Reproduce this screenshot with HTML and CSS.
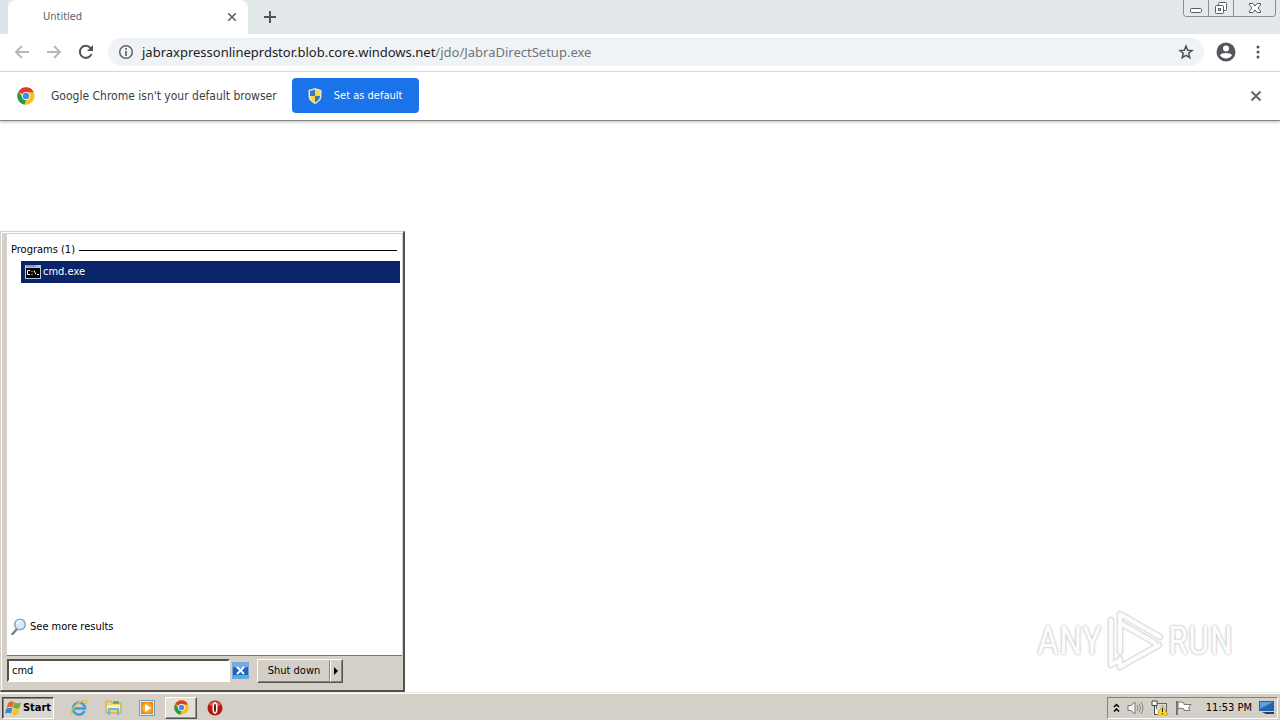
FILE: index.html
```html
<!DOCTYPE html>
<html lang="en">
<head>
<meta charset="utf-8">
<title>Desktop</title>
<link rel="stylesheet" href="styles.css">
</head>
<body>
<svg class="defs" aria-hidden="true">
  <symbol id="chrome" viewBox="0 0 48 48">
    <circle cx="24" cy="24" r="23" fill="#fbc116"/>
    <path d="M24 24 4 12.500A23 23 0 0 1 44 12.500L44 14H24Z" fill="#e33b2e"/>
    <path d="M4 12.500 15.300 29 24 34 20 47A23 23 0 0 1 4 12.500Z" fill="#249a4b"/>
    <circle cx="24" cy="24" r="11" fill="#fff"/>
    <circle cx="24" cy="24" r="8.500" fill="#4688f1"/>
  </symbol>
  <symbol id="cross" viewBox="0 0 12 12"><path d="M1.500 1.500 10.500 10.500M10.500 1.500 1.500 10.500" fill="none" stroke="#5f6368" stroke-width="2"/></symbol>
</svg>
<main class="browser">
  <header class="tabstrip">
    <div class="strip-edge"></div>
    <div class="tab"><span class="tab-title">Untitled</span><button class="plain" aria-label="Close tab"><svg width="10" height="10"><use href="#cross"/></svg></button></div>
    <button class="plain new-tab" aria-label="New tab"><svg width="12" height="12" viewBox="0 0 12 12"><path d="M6 0V12M0 6H12" stroke="#505458" stroke-width="2"/></svg></button>
    <div class="window-controls">
      <button aria-label="Minimize"><svg width="14" height="16" viewBox="0 0 14 16"><rect x="1.500" y="8.500" width="11" height="4" rx="1" fill="#fff" stroke="#555c65"/></svg></button>
      <button aria-label="Restore"><svg width="14" height="16" viewBox="0 0 14 16"><g fill="#fff" stroke="#555c65"><rect x="4.500" y="2.500" width="8" height="8" rx="1"/><rect x="1.500" y="5.500" width="8" height="8" rx="1"/><rect x="4.500" y="8.500" width="2" height="2"/></g></svg></button>
      <button class="wide" aria-label="Close"><svg width="14" height="16" viewBox="0 0 14 16"><path d="M1.500 3.500H5L7 6 9 3.500H12.500V5L10 8 12.500 11V12.500H9L7 10 5 12.500H1.500V11L4 8 1.500 5Z" fill="#fff" stroke="#555c65"/></svg></button>
    </div>
  </header>
  <nav class="toolbar">
    <button class="plain nav-btn" aria-label="Back"><svg width="16" height="16" viewBox="0 0 16 16"><path d="M15 8H2M8 2 2 8 8 14" fill="none" stroke="#b6b8ba" stroke-width="2"/></svg></button>
    <button class="plain nav-btn" aria-label="Forward"><svg width="16" height="16" viewBox="0 0 16 16"><path d="M1 8H14M8 2 14 8 8 14" fill="none" stroke="#b6b8ba" stroke-width="2"/></svg></button>
    <button class="plain nav-btn" aria-label="Reload"><svg width="16" height="16" viewBox="0 0 16 16"><path d="M13.500 10A6 6 0 1 1 12.500 4" fill="none" stroke="#505458" stroke-width="2"/><path d="M15 1V7H9Z" fill="#505458"/></svg></button>
    <div class="address">
      <svg width="16" height="16" viewBox="0 0 16 16"><circle cx="8" cy="8" r="6.300" fill="none" stroke="#5f6368" stroke-width="1.500"/><path d="M8 7V12M8 4V5.700" stroke="#5f6368" stroke-width="1.700"/></svg>
      <a class="url" href="#">jabraxpressonlineprdstor.blob.core.windows.net<span class="path">/jdo/JabraDirectSetup.exe</span></a>
      <button class="plain star" aria-label="Bookmark"><svg width="16" height="16" viewBox="0 0 16 16"><path d="M8 2 9.700 6.200 14 6.500 10.700 9.300 11.800 13.700 8 11.300 4.200 13.700 5.300 9.300 2 6.500 6.300 6.200Z" fill="none" stroke="#505458" stroke-width="1.500"/></svg></button>
    </div>
    <button class="plain" aria-label="Profile"><svg width="20" height="20" viewBox="0 0 20 20"><circle cx="10" cy="10" r="9.500" fill="#54585d"/><circle cx="10" cy="6.500" r="3" fill="#fff"/><path d="M4 13.500C5 10.300 15 10.300 16 13.500 13 17.500 7 17.500 4 13.500Z" fill="#fff"/></svg></button>
    <button class="plain menu-btn" aria-label="Menu"><svg width="4" height="14" viewBox="0 0 4 14" fill="#505458"><circle cx="2" cy="2" r="1.500"/><circle cx="2" cy="7" r="1.500"/><circle cx="2" cy="12" r="1.500"/></svg></button>
  </nav>
  <section class="infobar">
    <svg width="18" height="18"><use href="#chrome"/></svg>
    <span class="info-text">Google Chrome isn't your default browser</span>
    <button class="default-btn"><svg width="14" height="16" viewBox="0 0 14 16"><path d="M7 0 13.500 2V8C13.500 12 10 14.500 7 16 4 14.500.5 12 .5 8V2Z" fill="#e5e5ce"/><path d="M7 1.500V8H2V3Z" fill="#3978c4"/><path d="M7 1.500 12 3V8H7Z" fill="#fada35"/><path d="M2 8H7V14.500C4 13 2 11 2 8Z" fill="#fada35"/><path d="M7 8H12C12 11 10 13 7 14.500Z" fill="#3978c4"/></svg>Set as default</button>
    <button class="plain info-close" aria-label="Dismiss"><svg width="12" height="12"><use href="#cross"/></svg></button>
  </section>
  <section class="page">
    <div class="watermark"><span>ANY</span><svg width="58" height="64" viewBox="0 0 58 64"><g fill="none" stroke-linejoin="round" stroke-linecap="round"><path d="M14 5 54 28M14 5V43M14 14 49 34M5 11V56L12 52M14 58 53 36M14 50V58" stroke="#e0e0e0" stroke-width="7"/><path d="M14 5 54 28M14 5V43M14 14 49 34M5 11V56L12 52M14 58 53 36M14 50V58" stroke="#fcfcfc" stroke-width="4"/></g></svg><span>RUN</span></div>
  </section>
</main>
<aside class="start-menu">
  <div class="results">
    <div class="group"><span>Programs (1)</span><i></i></div>
    <button class="result"><svg width="16" height="14" viewBox="0 0 16 14"><rect width="16" height="14" fill="#b8c3d3"/><path d="M1 1H11" stroke="#5277b8"/><rect x="1" y="3" width="14" height="10" fill="#000"/><path d="M5 5.500H2.500V9.500H5M6.500 6.500H7.500M6.500 9.500H7.500M9 5.500 11 9.500M12 9.500H14" fill="none" stroke="#fff"/></svg>cmd.exe</button>
    <a class="more" href="#"><svg width="16" height="18" viewBox="0 0 16 18"><path d="M6 11 1.500 16" stroke="#777f89" stroke-width="2.500" stroke-linecap="round"/><circle cx="9" cy="6.500" r="5.300" fill="#d3eafb" stroke="#8da4b8" stroke-width="1.500"/><path d="M6 6A3 3 0 0 1 10 3" fill="none" stroke="#fff" stroke-width="1.500"/></svg>See more results</a>
  </div>
  <div class="menu-foot">
    <input class="search" type="text" value="cmd" aria-label="Search programs and files">
    <button class="plain clear" aria-label="Clear search"><svg width="17" height="17" viewBox="0 0 17 17"><rect x=".5" y=".5" width="16" height="16" fill="#2860b5" stroke="#72a7dc"/><path d="M1 1H16V5Q8 7 1 5Z" fill="#76aae5"/><path d="M1 13H16V16H1Z" fill="#42b5e6"/><path d="M5 5 12 12M12 5 5 12" stroke="#fff" stroke-width="2"/></svg></button>
    <div class="split"><button class="shut">Shut down</button><button class="arrow" aria-label="Power options"><svg width="4" height="8" viewBox="0 0 4 8"><path d="M0 0 4 4 0 8Z"/></svg></button></div>
  </div>
</aside>
<footer class="taskbar">
  <button class="start"><svg width="17" height="16" viewBox="0 0 17 16"><path d="M3 3Q6 0 9 2L7.500 7.500Q5 6 1.500 8Z" fill="#eb642d"/><path d="M9.500 2.500Q12 4 16 2.500L14.500 8Q11 9.500 8 7.500Z" fill="#75ad36"/><path d="M1.300 8.500Q4.500 7 7.300 8.300L6 13.500Q3 12 0 13.500Z" fill="#3b86cd"/><path d="M8 8.500Q11 10 14.500 9L13 14Q10 16 6.500 14Z" fill="#f4c331"/></svg>Start</button>
  <div class="quick">
    <button class="task" aria-label="Internet Explorer"><svg width="18" height="18" viewBox="0 0 18 18"><path d="M14.500 12A6 6 0 1 1 15 9.500H4" fill="none" stroke="#35a2de" stroke-width="2.500"/><path d="M2 16C-1 13 5 5 12 2 17 0 18 2 15 5" fill="none" stroke="#e8bf43" stroke-width="1.500"/></svg></button>
    <button class="task" aria-label="Explorer"><svg width="17" height="17" viewBox="0 0 17 17"><path d="M1 2H6L7 4H16V14H1Z" fill="#ead480" stroke="#c8a953"/><path d="M8 2H14V5H8Z" fill="#64ae65"/><path d="M2 6H15V11H2Z" fill="#fff0ae"/><path d="M4 16V10H13V16" fill="none" stroke="#67b8df" stroke-width="2"/></svg></button>
    <button class="task" aria-label="Media Player"><svg width="16" height="16" viewBox="0 0 16 16"><rect x=".5" y=".5" width="15" height="15" fill="#d6edfa" stroke="#6c9fc3"/><rect x="2" y="2" width="12" height="12" fill="#f18a16"/><circle cx="8" cy="8" r="5" fill="#f9aa38"/><path d="M6 4 12 8 6 12Z" fill="#fff"/></svg></button>
    <button class="task active" aria-label="Google Chrome"><svg width="15" height="15"><use href="#chrome"/></svg></button>
    <button class="task" aria-label="Opera"><svg width="16" height="16" viewBox="0 0 16 16"><circle cx="8" cy="8" r="7.500" fill="#b51614"/><path d="M2 5A7 7 0 0 1 14 5Q8 8 2 5Z" fill="#dc5e55"/><ellipse cx="8" cy="8" rx="1.800" ry="5" fill="#8b0808" stroke="#fff" stroke-width="1.500"/></svg></button>
  </div>
  <div class="tray">
    <svg width="7" height="10" viewBox="0 0 7 10"><path d="M1 4 3.500 1.500 6 4M1 8.500 3.500 6 6 8.500" fill="none" stroke="#000" stroke-width="1.500"/></svg>
    <svg width="17" height="16" viewBox="0 0 17 16"><path d="M1 5.500H4L8 2V14L4 10.500H1Z" fill="#f8f8f8" stroke="#777"/><path d="M10 5Q12 8 10 11M12 3.500Q15 8 12 12.500M14 2Q18 8 14 14" fill="none" stroke="#888"/></svg>
    <svg width="17" height="16" viewBox="0 0 17 16"><rect x="5.500" y="3.500" width="10" height="9" fill="#d9d9d5" stroke="#666"/><path d="M1 1H6V5.500H1ZM3.500 5V14.500H8" fill="#fff" stroke="#444"/><path d="M11.500 5 17 15H6Z" fill="#fad52e" stroke="#a8861c" stroke-width=".5"/><path d="M11.500 8V12M11.500 13V14" stroke="#222"/></svg>
    <svg width="18" height="16" viewBox="0 0 18 16"><path d="M2 1V15" stroke="#777" stroke-width="2"/><path d="M3 2.500Q6 1 9 3V4.500H16L13.500 7.500 15 10.500H9V9Q6 7 3 9Z" fill="#fff" stroke="#777"/></svg>
    <time>11:53 PM</time>
    <svg width="16" height="15" viewBox="0 0 16 15"><path d="M0 1H15V11H0Z" fill="#2463ad"/><path d="M1 2H14L1 9Z" fill="#5b9de1"/><path d="M3 12H15V14H7Z" fill="#203e6c"/></svg>
  </div>
</footer>
</body>
</html>
```
FILE: styles.css
```css
* { box-sizing: border-box; }
body { margin: 0; height: 100vh; display: flex; flex-direction: column; overflow: hidden; background: #fff; color: #000; font: 11px/14px "DejaVu Sans Condensed", "Noto Sans", sans-serif; }
button, input { font: inherit; color: inherit; }
button { display: flex; align-items: center; justify-content: center; padding: 0; }
a { color: inherit; text-decoration: none; }
svg { flex: none; display: block; }
.defs { position: absolute; width: 0; height: 0; }
.plain { border: 0; background: transparent; }
.browser { flex: 1; min-height: 0; display: flex; flex-direction: column; }
.tabstrip { height: 34px; flex: none; display: flex; background: #e3e8eb; }
.strip-edge { width: 8px; background: #dee3e7; border-radius: 0 0 8px 0; }
.tab { width: 240px; display: flex; align-items: center; justify-content: space-between; padding: 0 11px 0 35px; background: #fff; border-radius: 8px 8px 0 0; color: #5f6368; }
.new-tab { width: 44px; }
.window-controls { display: flex; height: 17px; margin: 0 4px 0 auto; border: 1px solid #8b9095; border-top: 0; border-radius: 0 0 4px 4px; overflow: hidden; }
.window-controls button { width: 25px; border: 0; border-right: 1px solid #8b9095; background: #e5e9ec; }
.window-controls .wide { width: 41px; border-right: 0; }
.toolbar { height: 38px; flex: none; display: flex; align-items: center; padding: 0 20px 1px 6px; border-bottom: 1px solid #d8dadc; }
.nav-btn { width: 32px; }
.address { flex: 1; height: 28px; display: flex; align-items: center; gap: 8px; margin: 0 12px 0 6px; padding: 0 10px; border-radius: 14px; background: #f0f3f5; }
.url { font: 13px/20px "Noto Sans", sans-serif; color: #202124; white-space: nowrap; }
.path { color: #70757a; }
.star { margin-left: auto; }
.menu-btn { margin-left: 20px; }
.infobar { height: 49px; flex: none; display: flex; align-items: center; padding: 0 18px 1px 17px; border-bottom: 1px solid #858585; box-shadow: 0 1px 3px #bbb; }
.info-text { margin: 0 15px 0 16px; color: #3c4043; font-size: 12px; line-height: 16px; white-space: nowrap; }
.default-btn { height: 35px; width: 127px; gap: 12px; border: 0; border-radius: 4px; background: #1a73e8; color: #fff; white-space: nowrap; }
.info-close { margin-left: auto; }
.page { flex: 1; display: flex; justify-content: flex-end; align-items: flex-end; padding: 0 47px 19px; }
.watermark { display: flex; align-items: center; gap: 4px; color: #fcfcfc; font: 38px/44px "Roboto Condensed", "Liberation Sans", sans-serif; text-shadow: 0 0 2px #b8b8b8, 0 0 3px #d0d0d0; }
.start-menu { position: absolute; left: 0; bottom: 28px; width: 405px; height: 461px; display: flex; flex-direction: column; border: 1px solid #d4d0c8; border-right: 2px solid #55534f; border-bottom: 2px solid #55534f; background: #d4d0c8; box-shadow: inset 1px 1px #fff; padding: 2px 1px 0 2px; }
.results { flex: 1; display: flex; flex-direction: column; margin: 0 0 0 4px; padding: 9px 2px 19px 4px; background: #fff; border-bottom: 1px solid #77756f; }
.group { display: flex; align-items: center; gap: 4px; white-space: nowrap; }
.group i { flex: 1; height: 1px; margin-right: 3px; background: #000; }
.result { height: 22px; margin: 4px 0 0 10px; padding-left: 4px; gap: 2px; justify-content: flex-start; border: 0; background: #0a246a; color: #fff; }
.more { display: flex; align-items: center; gap: 3px; margin-top: auto; }
.menu-foot { display: flex; align-items: center; height: 34px; padding: 0 0 5px 4px; }
.search { width: 223px; height: 23px; padding: 0 3px; border: 2px solid; border-color: #55534f #fff #fff #55534f; border-radius: 0; background: #fff; outline: 0; }
.clear { margin: 0 8px 0 2px; }
.split { display: flex; height: 24px; border: 1px solid #55534f; border-top-color: #fff; border-left-color: #fff; }
.split button { border: 1px solid #d4d0c8; border-right-color: #85827b; border-bottom-color: #85827b; background: #d4d0c8; }
.split .shut { width: 72px; white-space: nowrap; }
.split .arrow { width: 12px; border-left-color: #fff; }
.taskbar { height: 28px; flex: none; display: flex; align-items: center; padding: 2px 2px 0; background: #d4d0c8; border-top: 1px solid #e8e6e1; box-shadow: inset 0 1px #fff; }
.start { width: 52px; height: 22px; gap: 1px; border: 1px solid; border-color: #44423f #fff #fff #44423f; box-shadow: inset 1px 1px #88857d; background: #d9d6cf; font-weight: bold; }
.quick { display: flex; align-items: center; margin-left: 9px; gap: 2px; }
.task { width: 32px; height: 22px; border: 1px solid transparent; background: transparent; }
.task.active { border-color: #fff #55534f #55534f #fff; background: #e3e0da; box-shadow: inset -1px -1px #96938b; }
.tray { display: flex; align-items: center; gap: 7px; height: 22px; margin-left: auto; padding: 0 2px 0 5px; border: 1px solid; border-color: #85827b #fff #fff #85827b; }
.tray time { margin-left: 6px; white-space: nowrap; }
```
